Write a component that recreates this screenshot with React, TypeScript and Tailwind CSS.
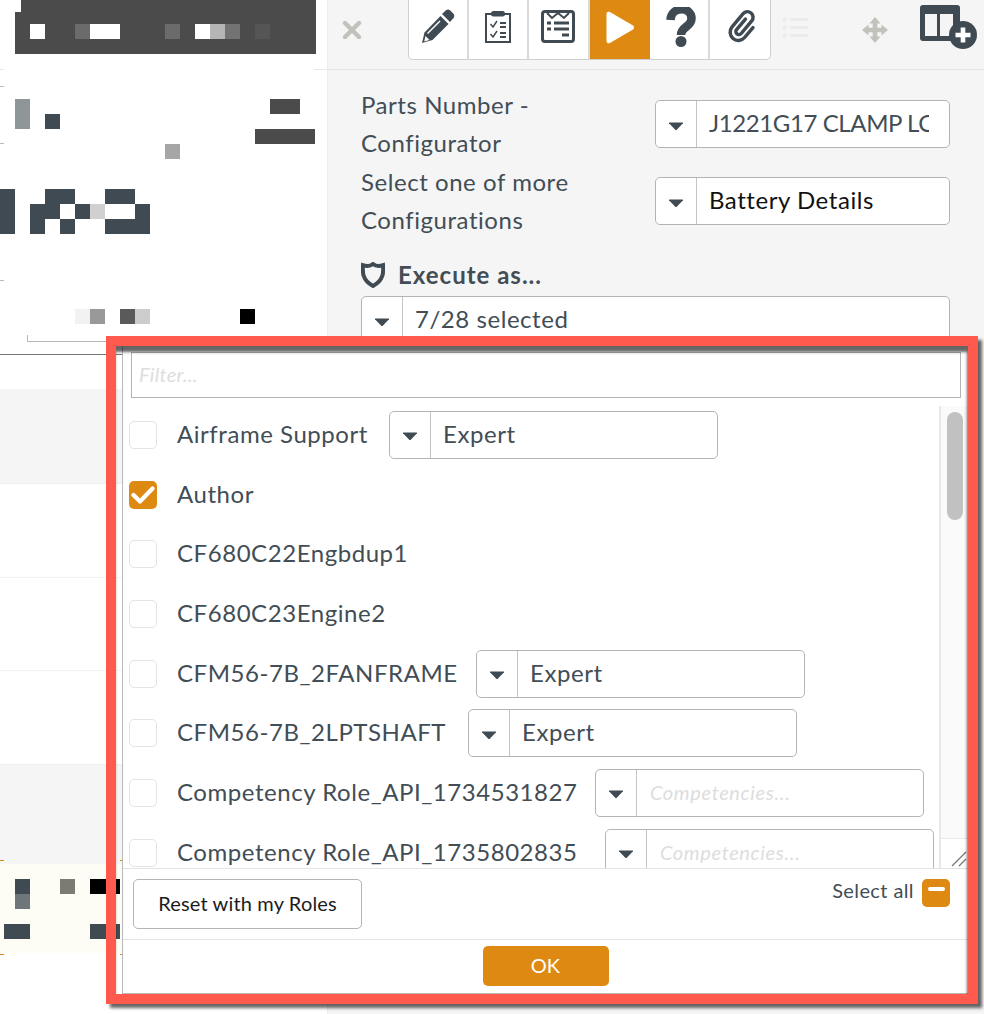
import React from "react";

const slate = "#3f4a52";

// redacted mosaic cells, one cell is 15px
const upperCells = [
  "col-[2/3] row-[1/3] bg-[#8f9699]",
  "col-[4/5] row-[2/3] bg-[#3f4a52]",
  "col-[19/21] row-[1/2] bg-[#4b4b4b]",
  "col-[18/22] row-[3/4] bg-[#4b4b4b]",
  "col-[12/13] row-[4/5] bg-[#a6a6a6]",
  "col-[1/2] row-[7/10] bg-[#3f4a52]",
  "col-[4/6] row-[7/8] bg-[#3f4a52]",
  "col-[8/10] row-[7/8] bg-[#3f4a52]",
  "col-[3/5] row-[8/9] bg-[#3f4a52]",
  "col-[6/7] row-[8/9] bg-[#3f4a52]",
  "col-[7/8] row-[8/9] bg-[#d0d0d0]",
  "col-[10/11] row-[8/9] bg-[#3f4a52]",
  "col-[3/4] row-[9/10] bg-[#3f4a52]",
  "col-[5/6] row-[9/10] bg-[#3f4a52]",
  "col-[8/11] row-[9/10] bg-[#3f4a52]",
  "col-[6/7] row-[15/16] bg-[#f2f2f2]",
  "col-[7/8] row-[15/16] bg-[#999999]",
  "col-[9/10] row-[15/16] bg-[#5a5a5a]",
  "col-[10/11] row-[15/16] bg-[#cccccc]",
  "col-[17/18] row-[15/16] bg-black",
];

const headerCells = [
  "col-[2/3] bg-white",
  "col-[5/6] bg-[#6b6b6b]",
  "col-[6/8] bg-white",
  "col-[11/12] bg-[#6b6b6b]",
  "col-[13/14] bg-white",
  "col-[14/15] bg-[#b5b5b5]",
  "col-[15/16] bg-[#737373]",
  "col-[17/18] bg-[#555555]",
];

const creamCells = [
  "col-[2/3] row-[1/2] bg-[#3f4a52]",
  "col-[2/3] row-[2/3] bg-[#6f7679]",
  "col-[5/6] row-[1/2] bg-[#7b7b74]",
  "col-[7/9] row-[1/2] bg-black",
  "col-[1/3] row-[4/5] ml-[4px] bg-[#3f4a52]",
  "col-[7/9] row-[4/5] bg-[#3f4a52]",
];

function Caret() {
  return (
    <svg width="16" height="9" viewBox="0 0 16 9">
      <path d="M1 1.2 Q0.6 .4 1.6 .4 H14.4 Q15.4 .4 15 1.2 L9 7.6 Q8 8.6 7 7.6 Z" fill={slate} />
    </svg>
  );
}

function Select({
  value,
  placeholder,
  className,
  valueClass,
}: {
  value?: string;
  placeholder?: string;
  className: string;
  valueClass?: string;
}) {
  return (
    <div className={`flex h-12 shrink-0 overflow-hidden rounded-[5px] border border-[#b4b4b4] bg-white ${className}`}>
      <div className="my-auto flex h-[46px] w-[41px] shrink-0 items-center justify-center border-r border-[#c4c4c4] pt-1">
        <Caret />
      </div>
      {value ? (
        <div className={`ml-[12px] mr-5 min-w-0 flex-1 overflow-hidden whitespace-nowrap text-[24px] leading-[44px] ${valueClass ?? "text-[#424d55]"}`}>
          {value}
        </div>
      ) : (
        <div className="pl-[13px] text-[20px] italic leading-[44px] tracking-[0.65px] text-[#dddddd]">{placeholder}</div>
      )}
    </div>
  );
}

function Check({ on }: { on?: boolean }) {
  if (on) {
    return (
      <div className="flex h-7 w-7 items-center justify-center rounded-[5px] bg-[#de8a12]">
        <svg width="24" height="20" viewBox="0 0 24 20">
          <path d="M2.5 10 L9 16.5 L21.5 3.5" fill="none" stroke="#fff" strokeWidth="4.2" strokeLinecap="round" strokeLinejoin="round" />
        </svg>
      </div>
    );
  }
  return <div className="h-7 w-7 rounded-[5px] border border-[#e4e4e4] bg-white" />;
}

const roles = [
  { name: "Airframe Support", value: "Expert", w: "w-[191px]" },
  { name: "Author", on: true },
  { name: "CF680C22Engbdup1" },
  { name: "CF680C23Engine2" },
  { name: "CFM56-7B_2FANFRAME", value: "Expert", w: "w-[278px]" },
  { name: "CFM56-7B_2LPTSHAFT", value: "Expert", w: "w-[270px]" },
  { name: "Competency Role_API_1734531827", placeholder: "Competencies...", w: "w-[397px]" },
  { name: "Competency Role_API_1735802835", placeholder: "Competencies...", w: "w-[407px]" },
];

function RoleRow({ role }: { role: (typeof roles)[number] }) {
  return (
    <div className="flex h-[59.7px] shrink-0 items-center pl-[6px]">
      <Check on={role.on} />
      <div className={`-mt-[2px] ml-5 shrink-0 whitespace-nowrap text-[24px] text-[#424d55] ${role.w ?? ""}`}>{role.name}</div>
      {(role.value || role.placeholder) && (
        <Select value={role.value} placeholder={role.placeholder} className="ml-[21px] w-[328.6px]" />
      )}
    </div>
  );
}

function ToolButton({ children, active }: { children: React.ReactNode; active?: boolean }) {
  return (
    <div
      className={`flex h-full w-[60.2px] items-center justify-center last:border-r-0 ${
        active ? "bg-[#de8a12]" : "border-r-2 border-[#dadada]"
      }`}
    >
      {children}
    </div>
  );
}

function Toolbar() {
  return (
    <div className="flex h-[70px] items-start border-b border-[#e6e6e6]">
      {/* close */}
      <svg className="ml-[14px] mt-[21px]" width="20" height="18" viewBox="0 0 20 18">
        <path d="M3 2 L17 16 M17 2 L3 16" stroke="#c2c2bd" strokeWidth="4.4" strokeLinecap="round" />
      </svg>
      {/* button group */}
      <div className="ml-[46px] flex h-[60px] overflow-hidden rounded-b-[5px] border border-t-0 border-[#cfcfcf] bg-white">
        <ToolButton>
          <svg className="-mt-[6px]" width="34" height="35" viewBox="0 0 34 35">
            <path d="M1 34 L3.5 23.5 L19.5 7 L27.5 15 L11.5 31 Z" fill={slate} />
            <path d="M21 5 L25 1.2 Q27 -.2 29 1.2 L32.5 4.8 Q34 7 32.5 9 L29 13 Z" fill={slate} />
            <path d="M6.5 24.5 L19 12" stroke="#fff" strokeWidth="1.5" />
            <path d="M4.5 27 L8.5 31 L3.2 32.4 Z" fill="#fff" />
          </svg>
        </ToolButton>
        <ToolButton>
          <svg className="-mt-[6px]" width="26" height="33" viewBox="0 0 26 33">
            <rect x="1" y="4" width="24" height="28" fill="none" stroke={slate} strokeWidth="2" />
            <rect x="6" y="1" width="14" height="5.5" rx="2.5" fill={slate} />
            <path d="M5.5 14 L8 17 L12 11 M5.5 24 L8 27 L12 21" fill="none" stroke={slate} strokeWidth="1.5" />
            <path d="M15 13 H21 M15 17 H21 M15 23 H21 M15 27 H21" stroke={slate} strokeWidth="1.8" />
          </svg>
        </ToolButton>
        <ToolButton>
          <svg className="-mt-[6px]" width="34" height="33" viewBox="0 0 34 33">
            <rect x="1.5" y="1.5" width="31" height="30" rx="2.5" fill="none" stroke={slate} strokeWidth="3" />
            <path d="M6 3 L11 8 L17 3 L23 8 L28 3" fill="none" stroke={slate} strokeWidth="2" />
            <path d="M6 13 H10 M13 13 H28 M6 19 H10 M13 19 H28 M21 25 H28" stroke={slate} strokeWidth="3" />
          </svg>
        </ToolButton>
        <ToolButton active>
          <svg className="-mt-[5px] ml-px" width="29" height="33" viewBox="0 0 29 33">
            <path d="M0.5 3 Q0.5 0 3.5 .8 L27 14.5 Q29 16.5 27 18.5 L3.5 32.2 Q0.5 33 0.5 30 Z" fill="#fff" />
          </svg>
        </ToolButton>
        <ToolButton>
          <svg className="-mt-[6px] ml-[4px]" width="30" height="40" viewBox="0 0 30 40">
            <path d="M4.5 13 C5 -1 25.5 -1 25.5 11.5 C25.5 20 15 19.5 15 28" fill="none" stroke={slate} strokeWidth="8.5" />
            <circle cx="15" cy="34.5" r="5.5" fill={slate} />
          </svg>
        </ToolButton>
        <ToolButton>
          <svg className="-mt-[7px] ml-[5px]" width="38" height="38" viewBox="-2 -2 44 44">
            <path
              d="M17 12 V28 A3.5 3.5 0 0 0 24 28 V9 A6.5 6.5 0 0 0 11 9 V29 A9.5 9.5 0 0 0 30 29 V14"
              fill="none"
              stroke={slate}
              strokeWidth="4"
              strokeLinecap="round"
              transform="rotate(40 20 20)"
            />
          </svg>
        </ToolButton>
      </div>
      {/* list */}
      <svg className="ml-[11px] mt-[17px]" width="26" height="21" viewBox="0 0 26 21">
        <circle cx="2.5" cy="2.5" r="2.3" fill="#ececec" />
        <circle cx="2.5" cy="10.5" r="2.3" fill="#ececec" />
        <circle cx="2.5" cy="18.5" r="2.3" fill="#ececec" />
        <path d="M8 2.5 H26 M8 10.5 H26 M8 18.5 H26" stroke="#ececec" strokeWidth="3" />
      </svg>
      {/* move */}
      <svg className="ml-[54px] mt-[17px]" width="26" height="26" viewBox="0 0 28 28">
        <path d="M14 0 L20 7 H16.5 V11.5 H21 V8 L28 14 L21 20 V16.5 H16.5 V21 H20 L14 28 L8 21 H11.5 V16.5 H7 V20 L0 14 L7 8 V11.5 H11.5 V7 H8 Z" fill="#c2c2bd" />
      </svg>
      {/* add panel */}
      <svg className="ml-[32px] mt-[5px]" width="58" height="44" viewBox="0 0 58 44">
        <rect x="0" y="0" width="40" height="36" rx="3" fill={slate} />
        <rect x="5" y="9" width="12" height="22" fill="#f5f5f5" />
        <rect x="20" y="9" width="13" height="22" fill="#f5f5f5" />
        <circle cx="43" cy="30" r="14" fill={slate} />
        <path d="M43 22.5 V37.5 M35.5 30 H50.5" stroke="#fff" strokeWidth="4.6" />
      </svg>
    </div>
  );
}

function ConfigPanel() {
  return (
    <div className="min-w-0 flex-1 bg-[#f5f5f5]">
      <Toolbar />
      <div className="pl-[33px] pr-[34px] text-[24px] text-[#424d55]">
        <div className="mb-px mt-4 flex">
          <div className="w-[294px] leading-[38px]">
            Parts Number -<br />
            Configurator
          </div>
          <Select value="J1221G17 CLAMP LO" valueClass="text-[#424d55] tracking-[-0.4px]" className="mt-[14px] w-[295px]" />
        </div>
        <div className="flex">
          <div className="w-[294px] leading-[38px]">
            Select one of more
            <br />
            Configurations
          </div>
          <Select value="Battery Details" valueClass="text-[#111111]" className="mt-[14px] w-[295px]" />
        </div>
        <div className="mt-[18px] flex items-center">
          <svg width="24" height="26" viewBox="0 0 24 26">
            <path
              d="M12 2 C15 4.5 18 4.5 22 3.2 C22.5 10 23 18 12 24 C1 18 1.5 10 2 3.2 C6 4.5 9 4.5 12 2 Z"
              fill="none"
              stroke={slate}
              strokeWidth="4"
            />
          </svg>
          <span className="ml-[13px] font-bold tracking-[1px]">Execute as...</span>
        </div>
        <Select value="7/28 selected" className="mt-[3px] w-[589px]" />
      </div>
    </div>
  );
}

function LeftColumn() {
  return (
    <div className="relative w-[328px] shrink-0 border-r border-[#ececec]">
      {/* stray edges of the redacted area */}
      <div className="absolute left-0 top-[69px] h-px w-1 bg-[#e8e8e8]" />
      <div className="absolute left-[314px] top-[69px] h-px w-[13px] bg-[#e8e8e8]" />
      <div className="absolute left-0 top-[86px] h-px w-1 bg-[#bbbbbb]" />
      <div className="absolute left-0 top-[143px] h-px w-1 bg-[#bbbbbb]" />
      <div className="absolute left-0 top-[280px] h-px w-1 bg-[#bbbbbb]" />
      {/* dark header */}
      <div className="relative ml-[15px] mr-[11px] h-[54px] bg-[#4b4b4b] pt-[24px]">
        <div className="absolute left-0 top-0 h-[12px] w-[6px] bg-white" />
        <div className="grid h-[15px] grid-cols-[repeat(20,15px)]">
          {headerCells.map((c) => (
            <div key={c} className={c} />
          ))}
        </div>
      </div>
      {/* mosaic */}
      <div className="mt-[45px] grid grid-cols-[repeat(22,15px)] grid-rows-[repeat(15,15px)]">
        {upperCells.map((c) => (
          <div key={c} className={c} />
        ))}
      </div>
      <div className="ml-[27px] mt-[11px] h-[7px] border-b border-l border-[#b8b8b8]" />
      <div className="mt-[12px] h-px bg-[#777777]" />
      {/* list rows */}
      <div className="mt-[34px] h-[95px] border-b border-[#eeeeee] bg-[#f5f5f5]" />
      <div className="h-[94px] border-b border-[#f2f2f2]" />
      <div className="h-[93px] border-b border-[#f2f2f2]" />
      <div className="h-[94px] border-b border-[#eeeeee]" />
      <div className="h-[99px] bg-[#f5f5f5]" />
      <div className="relative h-[89px] bg-[#fdfdf6] pt-[15px]">
        <div className="absolute -top-[4px] left-0 flex w-[124px] justify-between">
          <div className="h-px w-1 bg-[#de8a12]" />
          <div className="h-px w-1 bg-[#de8a12]" />
        </div>
        <div className="absolute -bottom-[2px] left-0 flex w-[124px] justify-between">
          <div className="h-px w-1 bg-[#de8a12]" />
          <div className="h-px w-1 bg-[#de8a12]" />
        </div>
        <div className="grid grid-cols-[repeat(9,15px)] grid-rows-[repeat(4,15px)]">
          {creamCells.map((c) => (
            <div key={c} className={c} />
          ))}
        </div>
      </div>
    </div>
  );
}

function RolesPopover() {
  return (
    <div className="absolute left-[122px] top-[346px] flex h-[648px] w-[846px] flex-col border-b border-l border-[#b8b8b8] bg-white">
      <div className="ml-[8px] mr-[7px] mt-[6px] h-[46px] shrink-0 border border-[#b4b4b4] pl-[7px] text-[20px] italic leading-[42px] tracking-[0.3px] text-[#dddddd]">
        Filter...
      </div>
      <div className="flex h-[470px] shrink-0">
        <div className="min-w-0 flex-1 overflow-hidden pt-[7px]">
          {roles.map((r) => (
            <RoleRow key={r.name} role={r} />
          ))}
        </div>
        <div className="mt-[8px] flex w-[29px] shrink-0 flex-col border-l-2 border-[#e8e8e8] bg-[#fafafa]">
          <div className="ml-[6px] mt-[6px] h-[108px] w-4 rounded-lg bg-[#c1c1c1]" />
          <div className="mt-auto flex h-[30px] items-end justify-end border-t border-[#e8e8e8] bg-white">
            <svg width="18" height="18" viewBox="0 0 18 18">
              <path d="M2 16 L16 2 M9 16 L16 9" stroke="#777777" strokeWidth="1.3" />
            </svg>
          </div>
        </div>
      </div>
      <div className="flex h-[71px] shrink-0 items-start justify-between border-t border-[#e4e4e4] pl-[10px] pr-[18px] pt-[10px]">
        <button className="h-[50px] w-[229px] rounded-[5px] border border-[#b4b4b4] bg-white pb-[3px] text-[20px] tracking-[0.15px] text-[#1c1c1c]">
          Reset with my Roles
        </button>
        <div className="flex items-center gap-2">
          <span className="-mt-[6px] text-[20px] tracking-[0.4px] text-[#424d55]">Select all</span>
          <div className="flex h-7 w-7 items-center justify-center rounded-[5px] bg-[#de8a12]">
            <div className="-mt-[8px] h-[4px] w-[17px] rounded-sm bg-white" />
          </div>
        </div>
      </div>
      <div className="flex flex-1 items-start justify-center border-t border-[#e4e4e4] pt-[6px]">
        <button className="h-10 w-[126px] rounded-[5px] bg-[#de8a12] pb-[2px] text-[20px] tracking-normal text-white">OK</button>
      </div>
    </div>
  );
}

export default function App() {
  return (
    <div className="relative flex h-[1014px] w-[984px] overflow-hidden bg-white font-['Lato',sans-serif] tracking-[0.55px]">
      <LeftColumn />
      <ConfigPanel />
      <RolesPopover />
      {/* red annotation frame */}
      <div className="pointer-events-none absolute left-[106px] top-[336px] h-[668px] w-[872px] border-[10px] border-[#ff5a4d] shadow-[4px_4px_3px_rgba(0,0,0,0.6),inset_-1px_6px_3px_rgba(0,0,0,0.6)]" />
    </div>
  );
}
